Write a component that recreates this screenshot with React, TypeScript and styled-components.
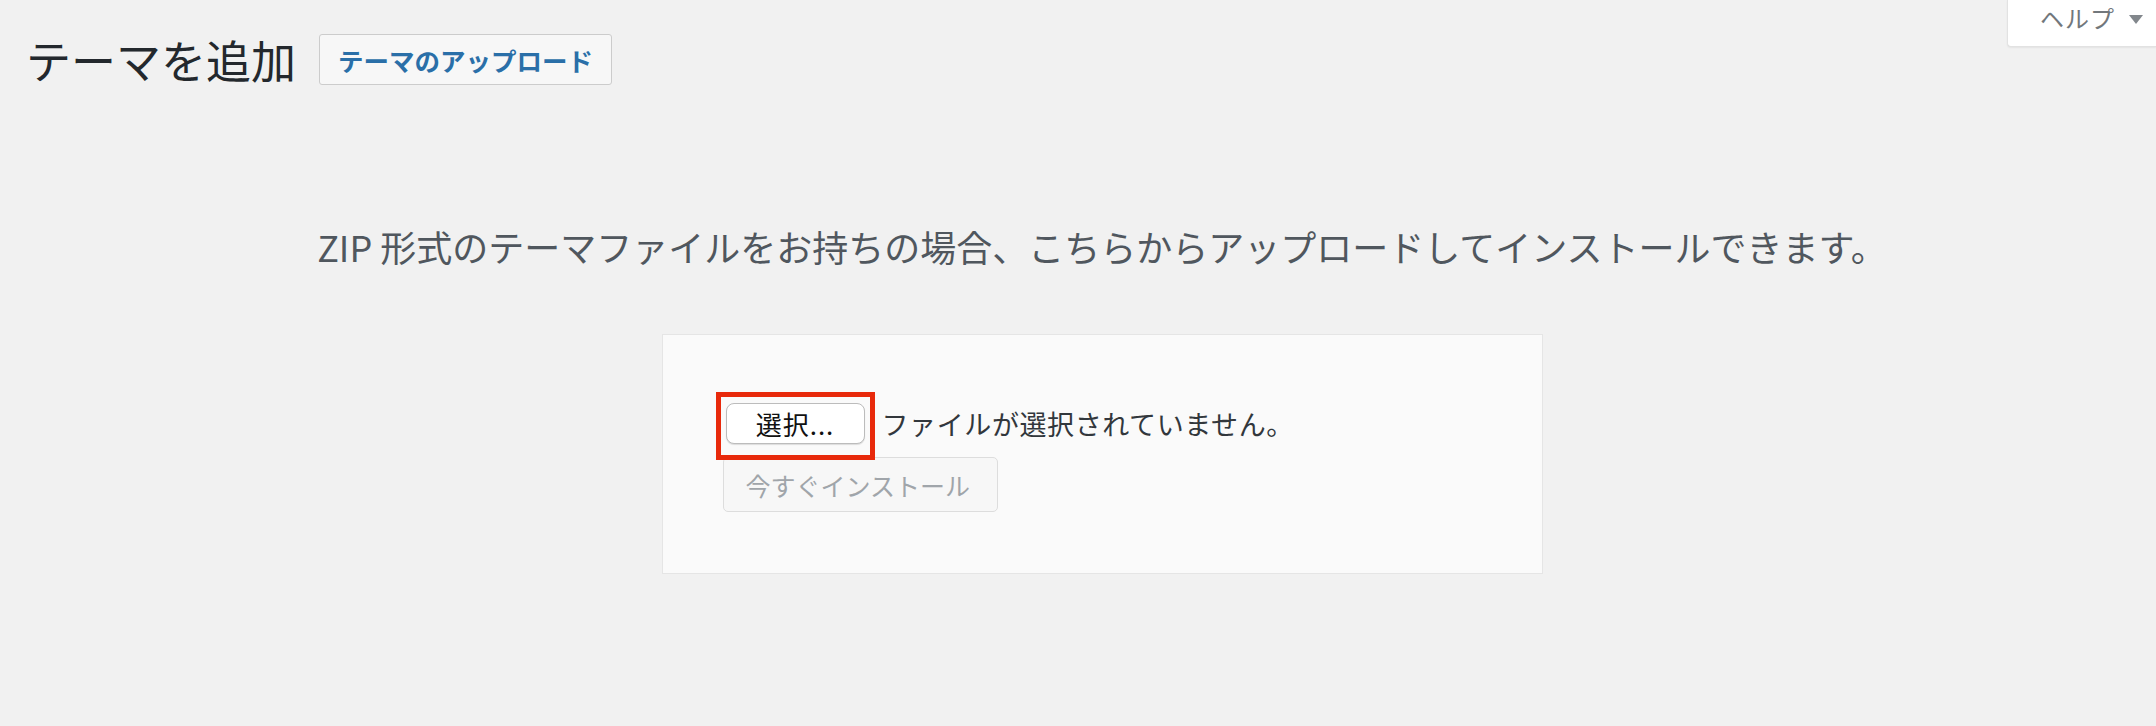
import React from "react";
import styled, { createGlobalStyle } from "styled-components";

const GlobalStyle = createGlobalStyle`
  html, body {
    margin: 0;
    padding: 0;
    background: #f1f1f1;
  }

  body {
    font-family: "Noto Sans CJK JP", "Noto Sans", sans-serif;
    color: #23282d;
  }
`;

const Page = styled.div`
  min-height: 726px;
  padding-left: 26px;
`;

const HelpTab = styled.button`
  float: right;
  display: flex;
  align-items: flex-start;
  gap: 14px;

  width: 149px;
  height: 47px;
  padding: 4px 0 0 32px;
  border: 1px solid #e2e2e2;
  border-top: none;
  border-right: none;
  border-radius: 0 0 0 4px;

  background: #ffffff;
  box-shadow: 0 1px 2px rgba(0, 0, 0, 0.06);

  font-family: inherit;
  font-size: 24px;
  letter-spacing: 1px;
  line-height: 28px;
  color: #72777c;
`;

const Arrow = styled.span`
  margin-top: 11px;
  width: 0;
  height: 0;
  border-left: 7px solid transparent;
  border-right: 7px solid transparent;
  border-top: 9px solid #82878c;
`;

const Header = styled.div`
  display: flex;
  align-items: center;
  gap: 23px;

  padding-top: 34px;
`;

const Title = styled.h1`
  margin: 0;

  font-size: 45px;
  font-weight: 400;
  line-height: 51px;
  color: #23282d;
`;

const UploadLink = styled.a`
  display: flex;
  align-items: center;
  box-sizing: border-box;

  height: 51px;
  padding: 0 18px;
  border: 1px solid #cccccc;
  border-radius: 3px;

  background: #f7f7f7;

  font-size: 25.5px;
  font-weight: 700;
  color: #2a6fa8;
  text-decoration: none;
`;

const UploadSection = styled.div`
  display: flex;
  flex-direction: column;
  align-items: center;

  padding-left: 22px;
`;

const InstallHelp = styled.p`
  margin: 137px 0 0;

  font-size: 36px;
  line-height: 49px;
  color: #50575e;
  text-align: center;
`;

const UploadForm = styled.form`
  display: flex;
  flex-direction: column;
  align-items: flex-start;
  gap: 13px;
  box-sizing: border-box;

  width: 881px;
  margin-top: 63px;
  padding: 68px 60px 61px;
  border: 1px solid #e5e5e5;

  background: #fafafa;
`;

const FileRow = styled.div`
  display: flex;
  align-items: center;
  gap: 17px;

  padding-left: 3px;
`;

const ChooseWrap = styled.div`
  position: relative;
  display: flex;
`;

const Highlight = styled.span`
  position: absolute;
  top: -11px;
  left: -10px;
  right: -10px;
  bottom: -16px;

  border: 5px solid #e8290b;
  pointer-events: none;
`;

const ChooseButton = styled.button`
  box-sizing: border-box;

  width: 139px;
  height: 41px;
  border: 1px solid #bcbcbc;
  border-radius: 8px;

  background: #ffffff;
  box-shadow: 0 1px 1px rgba(0, 0, 0, 0.12);

  font-family: inherit;
  font-size: 26px;
  letter-spacing: 1px;
  color: #111111;
`;

const FileStatus = styled.span`
  font-size: 27px;
  letter-spacing: 0.6px;
  line-height: 41px;
  color: #32373c;
`;

const InstallButton = styled.button`
  box-sizing: border-box;

  width: 275px;
  height: 55px;
  padding: 0 22px;
  border: 1px solid #dddddd;
  border-radius: 5px;

  background: #f7f7f7;

  font-family: inherit;
  font-size: 25px;
  color: #a0a5aa;
  text-align: left;
`;

export default function App() {
  return (
    <>
      <GlobalStyle />
      <Page>
        <HelpTab type="button">
          ヘルプ
          <Arrow />
        </HelpTab>

        <Header>
          <Title>テーマを追加</Title>
          <UploadLink href="#">テーマのアップロード</UploadLink>
        </Header>

        <UploadSection>
          <InstallHelp>
            ZIP 形式のテーマファイルをお持ちの場合、こちらからアップロードしてインストールできます。
          </InstallHelp>

          <UploadForm onSubmit={(e) => e.preventDefault()}>
            <FileRow>
              <ChooseWrap>
                <ChooseButton type="button">選択...</ChooseButton>
                <Highlight />
              </ChooseWrap>
              <FileStatus>ファイルが選択されていません。</FileStatus>
            </FileRow>
            <InstallButton type="submit" disabled>
              今すぐインストール
            </InstallButton>
          </UploadForm>
        </UploadSection>
      </Page>
    </>
  );
}
